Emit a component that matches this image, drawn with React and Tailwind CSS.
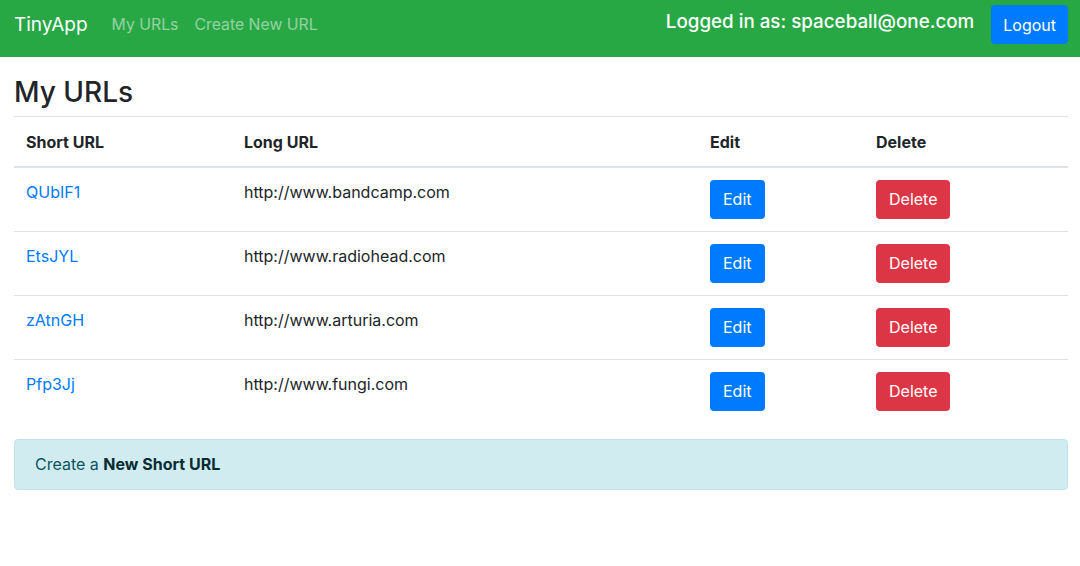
export default function App() {
  const rows = [
    ["QUbIF1", "http://www.bandcamp.com"],
    ["EtsJYL", "http://www.radiohead.com"],
    ["zAtnGH", "http://www.arturia.com"],
    ["Pfp3Jj", "http://www.fungi.com"],
  ];
  return (
    <div className="min-h-[566px] bg-white text-[#212529] text-base" style={{ fontFamily: "Inter, 'Noto Sans', sans-serif" }}>
      <nav className="h-[57px] bg-[#28a745] flex items-start justify-between pl-[14px] pr-[12px] pt-[5px]">
        <div className="flex items-center h-[40px]">
          <span className="text-white text-[19px] leading-[30px] mr-[16px]">TinyApp</span>
          <span className="text-white/50 text-[15.8px] leading-6 px-2">My URLs</span>
          <span className="text-white/50 text-[15.8px] leading-6 px-2">Create New URL</span>
        </div>
        <div className="flex items-start">
          <span className="text-white text-[18.8px] font-medium leading-[24px] mt-[5px] mr-[17px]">Logged in as: spaceball@one.com</span>
          <button className="bg-[#007bff] text-white rounded-[4px] h-[39px] px-[12px] text-base leading-6">Logout</button>
        </div>
      </nav>
      <main className="pl-[14px] pr-[12px]">
        <h2 className="text-[28px] font-medium leading-[1.2] pt-[19px] pb-[6px]">My URLs</h2>
        <table className="w-full border-collapse mb-4">
          <thead>
            <tr className="border-t border-[#dee2e6] border-b-2">
              <th className="text-left font-bold px-3 pt-[13px] pb-3 leading-6 w-[218px]">Short URL</th>
              <th className="text-left font-bold px-3 pt-[13px] pb-3 leading-6 w-[466px]">Long URL</th>
              <th className="text-left font-bold px-3 pt-[13px] pb-3 leading-6 w-[166px]">Edit</th>
              <th className="text-left font-bold px-3 pt-[13px] pb-3 leading-6">Delete</th>
            </tr>
          </thead>
          <tbody>
            {rows.map(([s, l]) => (
              <tr key={s} className="border-t border-[#dee2e6]">
                <td className="p-3 align-top leading-6 text-[#007bff]">{s}</td>
                <td className="p-3 align-top leading-6">{l}</td>
                <td className="p-3 align-top">
                  <button className="bg-[#007bff] text-white rounded-[4px] h-[39px] px-[13px] leading-6 block">Edit</button>
                </td>
                <td className="p-3 align-top">
                  <button className="bg-[#dc3545] text-white rounded-[4px] h-[39px] px-[13px] leading-6 block">Delete</button>
                </td>
              </tr>
            ))}
          </tbody>
        </table>
        <div className="bg-[#d1ecf1] border border-[#bee5eb] text-[#0c5460] rounded-[4px] px-5 pt-3 pb-[13px] leading-6">
          Create a <span className="font-bold text-[#062c33]">New Short URL</span>
        </div>
      </main>
    </div>
  );
}
